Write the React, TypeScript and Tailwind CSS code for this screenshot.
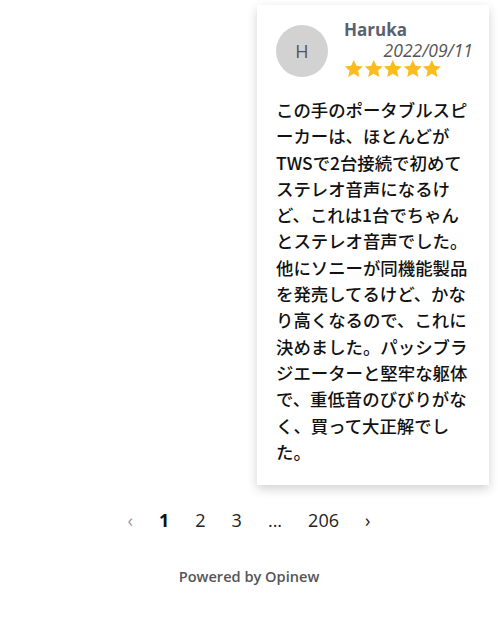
import React from "react";

const Star = () => (
  <svg width="19.6" height="20" viewBox="0 0 24 24" className="block">
    <path
      d="M12 1l3.25 7.1 7.75.8-5.8 5.2 1.7 7.7L12 17.8l-6.9 4 1.7-7.7L1 8.9l7.75-.8z"
      fill="#fbbd1e"
    />
  </svg>
);

export default function App() {
  const text =
    "この手のポータブルスピーカーは、ほとんどがTWSで2台接続で初めてステレオ音声になるけど、これは1台でちゃんとステレオ音声でした。他にソニーが同機能製品を発売してるけど、かなり高くなるので、これに決めました。パッシブラジエーターと堅牢な躯体で、重低音のびびりがなく、買って大正解でした。";
  return (
    <div
      className="w-[498px] bg-white"
      style={{ fontFamily: '"Open Sans", "Noto Sans", "Noto Sans CJK JP", sans-serif' }}
    >
      <div className="flex justify-end pr-[9px] pt-[5px]">
        <div className="w-[232px] bg-white shadow-[0_4px_10px_rgba(0,0,0,0.18)] px-[19px] pt-[14px] pb-[20px]">
          <div className="flex items-start">
            <div className="mt-[6px] w-[52px] h-[52px] rounded-full bg-[#d2d2d2] flex items-center justify-center text-[18px] text-[#555]">
              H
            </div>
            <div className="ml-[16px] flex-1">
              <div className="text-[17px] leading-[22px] font-bold text-[#5a6170]">Haruka</div>
              <div className="text-[17.5px] leading-[19px] italic text-[#555] text-right -mr-[3px]">
                2022/09/11
              </div>
              <div className="flex -mt-[1px]">
                <Star />
                <Star />
                <Star />
                <Star />
                <Star />
              </div>
            </div>
          </div>
          <div
            className="mt-[18px] text-[17.4px] leading-[26.3px] text-[#111] font-medium"
            style={{ fontFamily: '"Noto Sans CJK JP", sans-serif' }}
          >
            {text}
          </div>
        </div>
      </div>
      <div className="flex justify-center items-center mt-[21px] text-[18px] text-[#222] leading-[28px]">
        <span className="px-[13px] text-[#999] text-[18px]">&lsaquo;</span>
        <span className="px-[13px] font-bold text-[#111]">1</span>
        <span className="px-[13px]">2</span>
        <span className="px-[13px]">3</span>
        <span className="px-[13px]">...</span>
        <span className="px-[13px]">206</span>
        <span className="px-[13px] text-[18px] text-[#222]">&rsaquo;</span>
      </div>
      <div className="text-center mt-[32px] text-[14.6px] font-semibold text-[#555]">Powered by Opinew</div>
    </div>
  );
}
